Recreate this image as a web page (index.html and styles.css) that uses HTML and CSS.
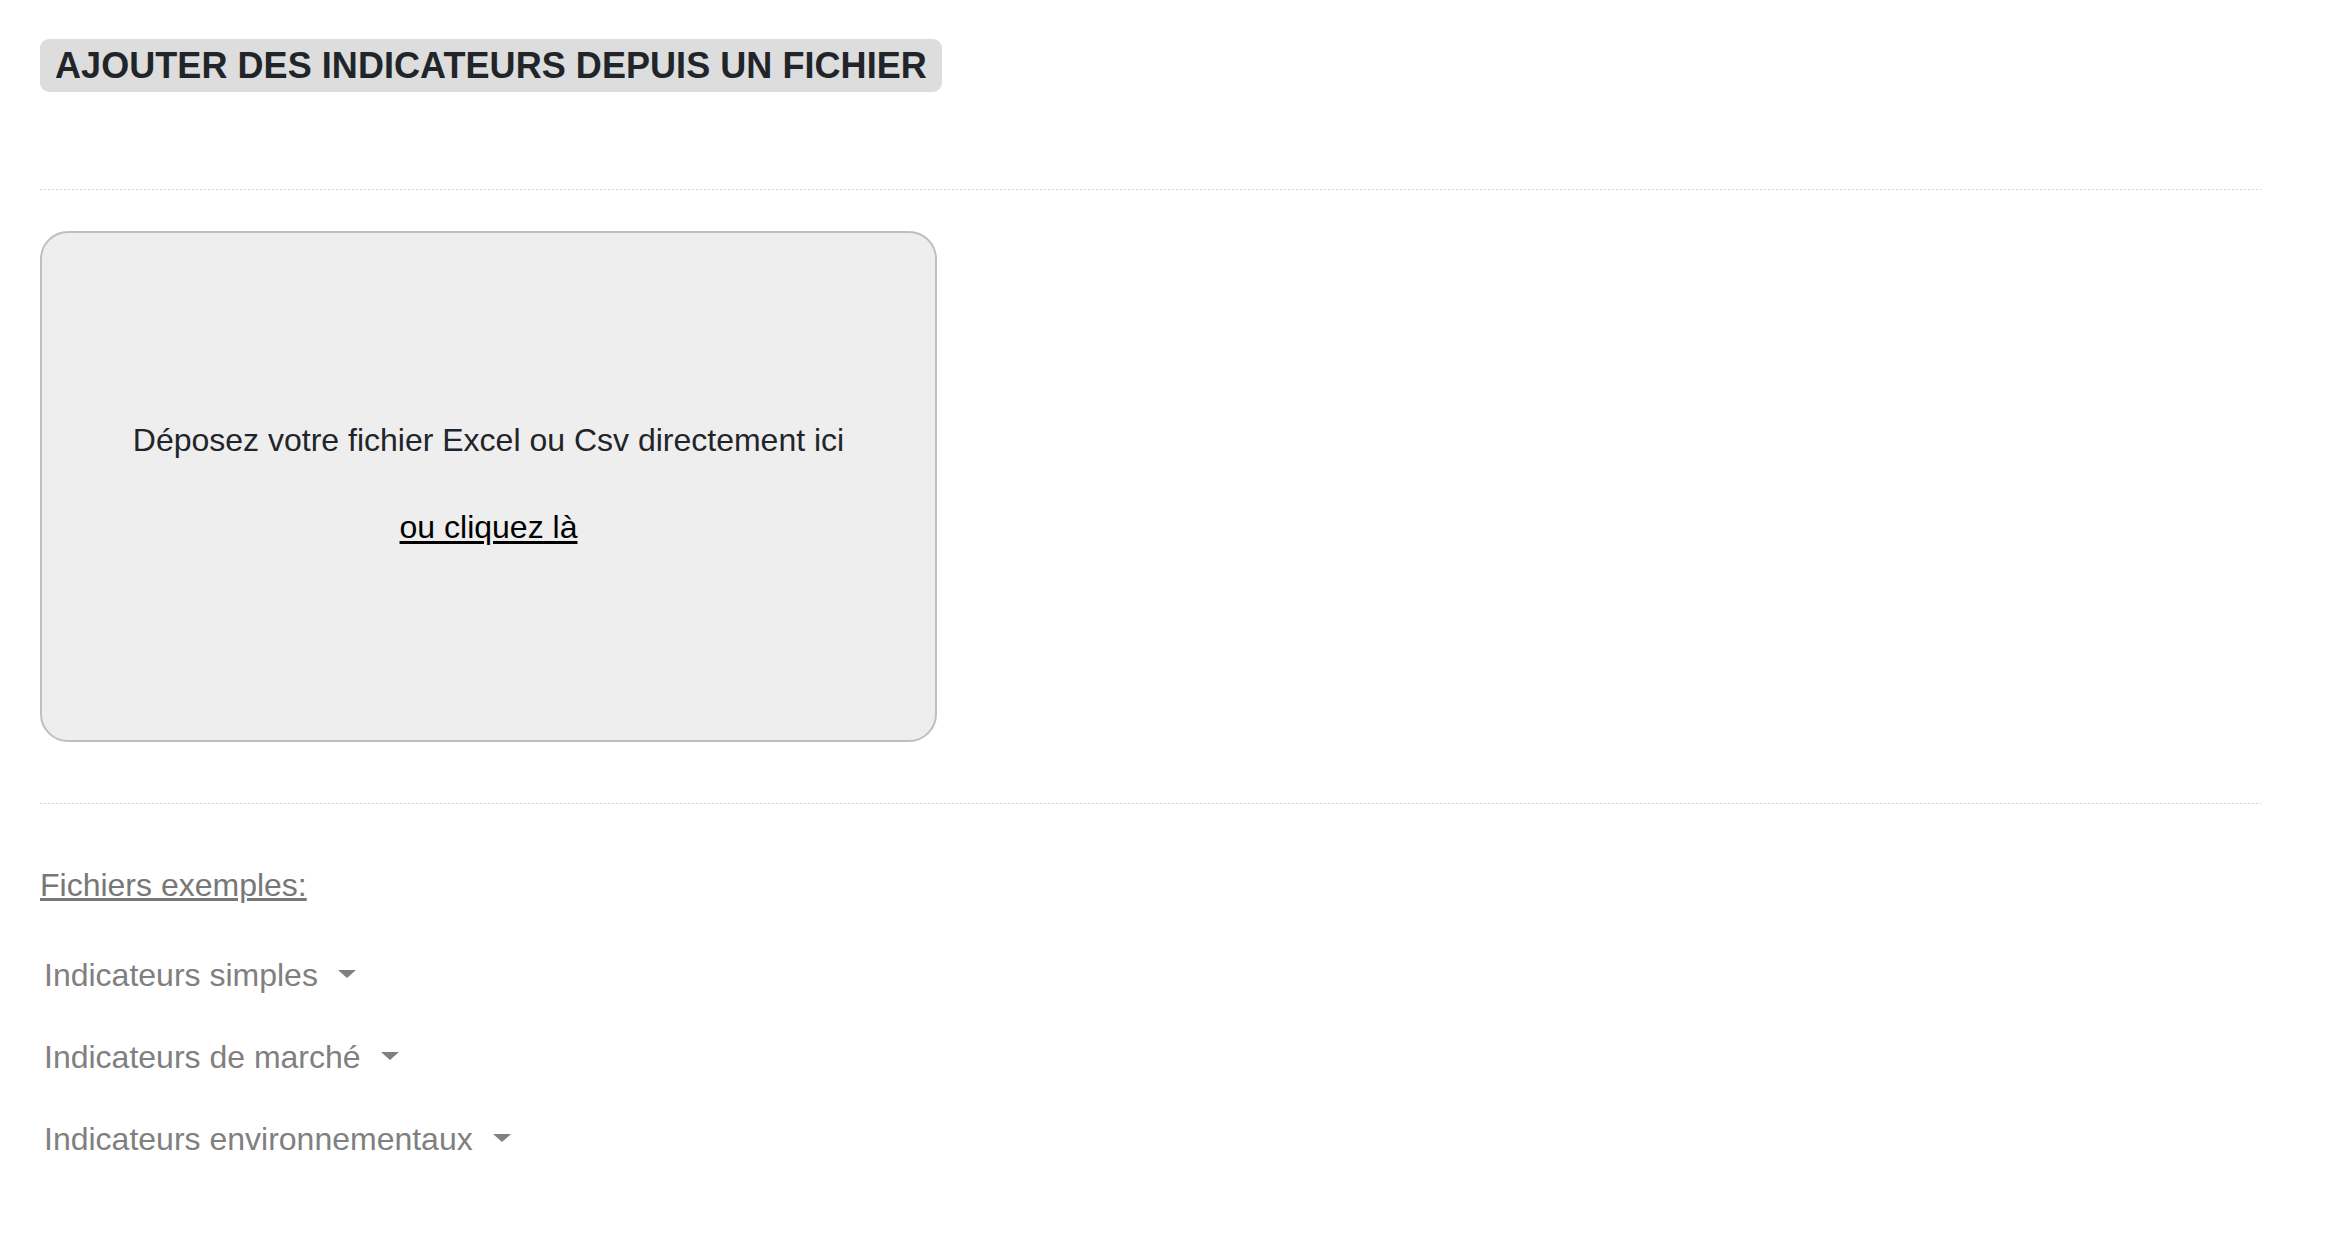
FILE: index.html
```html
<!DOCTYPE html>
<html lang="fr">
<head>
<meta charset="utf-8">
<title>Ajouter des indicateurs depuis un fichier</title>
<link rel="stylesheet" href="styles.css">
</head>
<body>
<main class="page">
  <header class="head">
    <h1 class="title">AJOUTER DES INDICATEURS DEPUIS UN FICHIER</h1>
  </header>
  <div class="sep"></div>
  <section class="dropzone">
    <p class="drop-text">Déposez votre fichier Excel ou Csv directement ici</p>
    <p class="drop-link"><a href="#">ou cliquez là</a></p>
  </section>
  <div class="sep sep-2"></div>
  <section class="examples">
    <a class="examples-title" href="#">Fichiers exemples:</a>
    <ul class="menu">
      <li><button class="toggle" type="button">Indicateurs simples<span class="caret"></span></button></li>
      <li><button class="toggle" type="button">Indicateurs de marché<span class="caret"></span></button></li>
      <li><button class="toggle" type="button">Indicateurs environnementaux<span class="caret"></span></button></li>
    </ul>
  </section>
</main>
</body>
</html>
```
FILE: styles.css
```css
html, body {
  margin: 0;
  padding: 0;
  background: #ffffff;
}

body {
  font-family: "Liberation Sans", Arial, Helvetica, sans-serif;
  color: #212529;
}

.page {
  padding: 39px 76px 0 40px;
}

.head {
  display: flex;
}

.title {
  margin: 0;
  padding: 1px 15px 0;
  font-size: 36px;
  font-weight: 700;
  line-height: 52px;
  letter-spacing: 0.06px;
  background: #dddddd;
  border-radius: 9px;
  color: #212529;
}

.sep {
  height: 1px;
  margin-top: 97px;
  background-image: repeating-linear-gradient(to right, #d2d2d2 0 2px, transparent 2px 4px);
}

.sep-2 {
  margin-top: 61px;
}

.dropzone {
  box-sizing: border-box;
  width: 897px;
  height: 511px;
  margin-top: 41px;
  padding-bottom: 6px;
  border: 2px solid #bfbfbf;
  border-radius: 28px;
  background: #eeeeee;
  display: flex;
  flex-direction: column;
  align-items: center;
  justify-content: center;
  gap: 44px;
  font-size: 32px;
  line-height: 43px;
}

.drop-text,
.drop-link {
  margin: 0;
}

.drop-link a {
  color: #000000;
  text-decoration: underline;
  text-underline-offset: 3px;
}

.examples {
  padding-top: 57px;
  font-size: 32px;
  line-height: 48px;
}

.examples-title {
  color: #777777;
  text-decoration: underline;
  text-underline-offset: 2px;
}

.menu {
  list-style: none;
  margin: 42px 0 0;
  padding: 0;
  display: flex;
  flex-direction: column;
  gap: 34px;
}

.toggle {
  font: inherit;
  line-height: 48px;
  color: #808080;
  background: none;
  border: 0;
  padding: 0 0 0 4px;
  margin: 0;
  cursor: pointer;
}

.caret {
  display: inline-block;
  width: 0;
  height: 0;
  margin-left: 20px;
  vertical-align: 8px;
  border-top: 8px solid #808080;
  border-left: 9px solid transparent;
  border-right: 9px solid transparent;
}
```
